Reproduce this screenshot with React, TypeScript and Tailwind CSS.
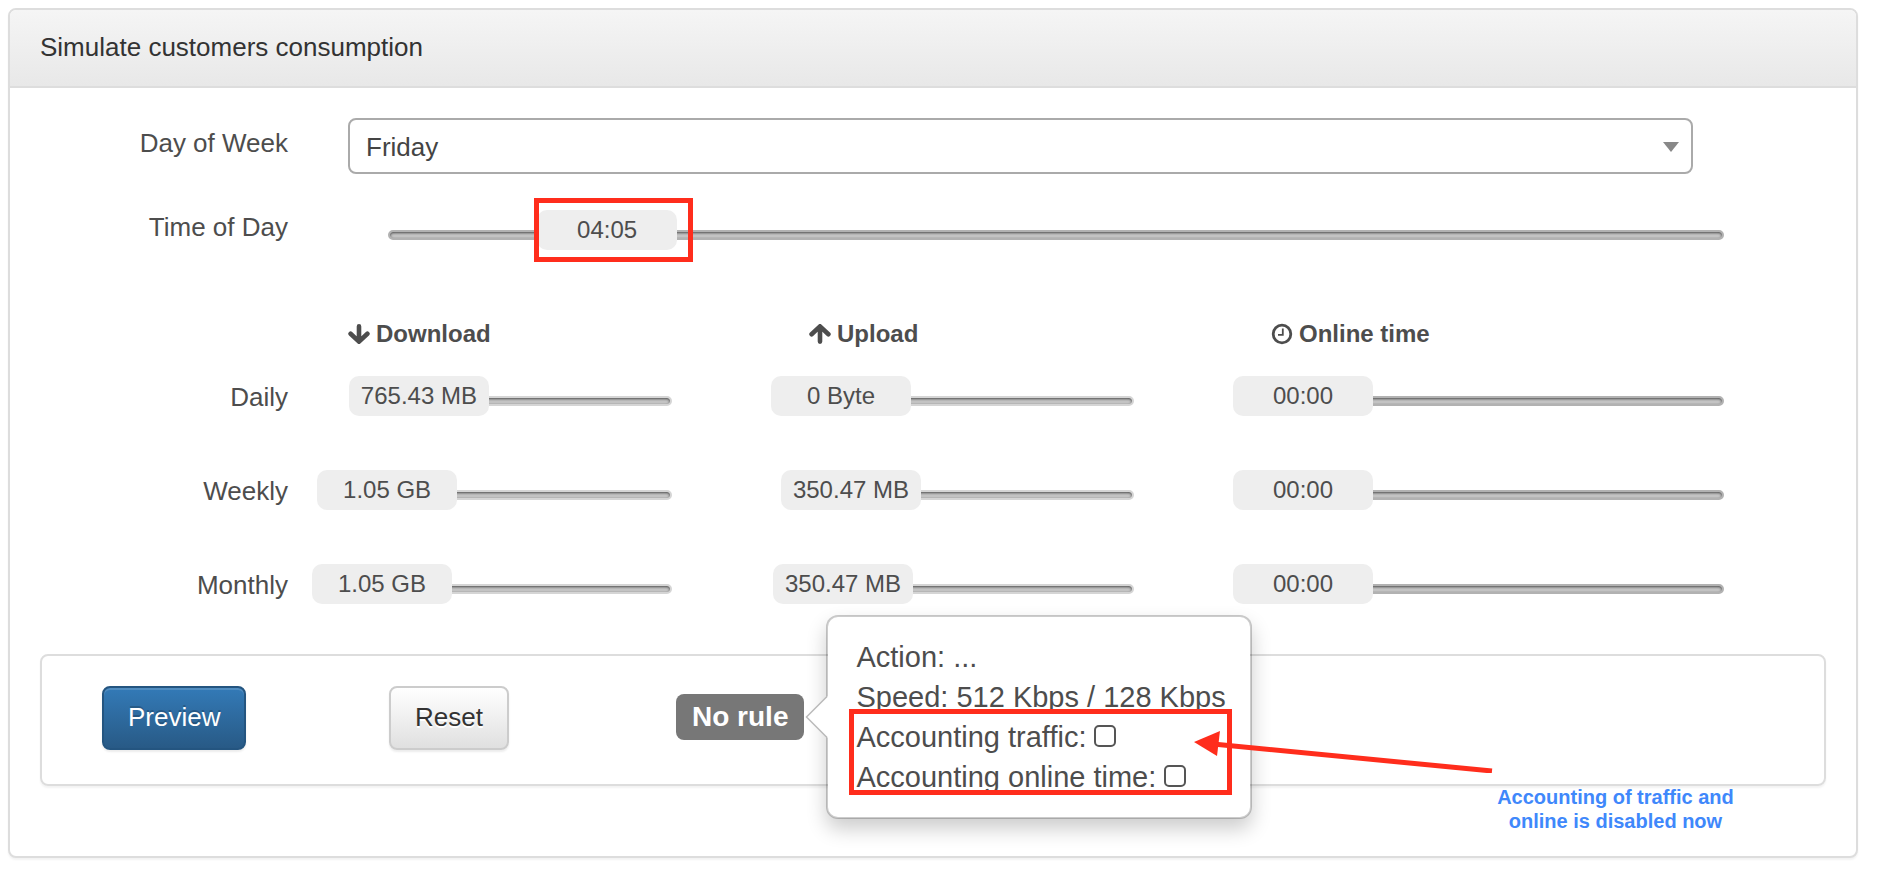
import React, { useId, useState } from "react";

type SliderProps = {
  label: string;
  value: string;
  percent: number;
  strong?: boolean;
  children?: React.ReactNode;
};

function Slider({ label, value, percent, strong, children }: SliderProps) {
  const id = useId();
  const [position, setPosition] = useState(percent);
  return (
    <div className="relative ml-10 h-10 pt-5">
      <input
        id={id}
        type="range"
        min={0}
        max={100}
        step={0.1}
        value={position}
        onChange={(e) => setPosition(Number(e.target.value))}
        aria-label={label}
        className={
          "block h-[10px] w-full appearance-none rounded-full border-2 bg-[#c9c9c9] shadow-[inset_0_1px_3px_#444] [&::-webkit-slider-thumb]:h-[6px] [&::-webkit-slider-thumb]:w-px [&::-webkit-slider-thumb]:appearance-none [&::-webkit-slider-thumb]:bg-transparent " +
          (strong ? "border-[#b2b2b2]" : "border-[#d5d5d5]")
        }
      />
      <div
        className="pointer-events-none absolute top-0 -ml-[78px] h-10 w-[140px]"
        style={{ left: `${position}%` }}
      >
        <output
          htmlFor={id}
          className="block rounded-[10px] bg-[#eee] text-center text-[24px] leading-[40px]"
        >
          {value}
        </output>
        {children}
      </div>
    </div>
  );
}

function ArrowIcon({ up }: { up?: boolean }) {
  return (
    <svg viewBox="0 0 22 20" className={up ? "h-5 w-[22px] rotate-180" : "h-5 w-[22px]"} aria-hidden="true">
      <path
        d="M11 2.4V15M2.6 9.8 11 17.6l8.4-7.8"
        fill="none"
        stroke="currentColor"
        strokeWidth="4.6"
        strokeLinecap="round"
        strokeLinejoin="miter"
      />
    </svg>
  );
}

function ClockIcon() {
  return (
    <svg viewBox="0 0 22 22" className="h-[22px] w-[22px]" aria-hidden="true">
      <circle cx="11" cy="11" r="8.8" fill="none" stroke="currentColor" strokeWidth="2.8" />
      <path d="M11.8 5.6V11.800H7" fill="none" stroke="currentColor" strokeWidth="1.8" />
    </svg>
  );
}

const periods = [
  {
    name: "Daily",
    download: ["765.43 MB", 13.7],
    upload: ["0 Byte", 0],
    online: ["00:00", 0],
  },
  {
    name: "Weekly",
    download: ["1.05 GB", 2.5],
    upload: ["350.47 MB", 3.5],
    online: ["00:00", 0],
  },
  {
    name: "Monthly",
    download: ["1.05 GB", 0.7],
    upload: ["350.47 MB", 0.7],
    online: ["00:00", 0],
  },
] as const;

const days = ["Monday", "Tuesday", "Wednesday", "Thursday", "Friday", "Saturday", "Sunday"];

const labelColumn = "w-[248px] shrink-0 text-right leading-[30px]";
const columns = "grid min-w-0 flex-1 grid-cols-[461fr_462fr_453fr]";
const checkbox =
  "ml-2 inline-block h-[22px] w-[22px] appearance-none rounded-[5px] border-2 border-[#555] bg-white align-baseline checked:bg-[#337ab7]";

function RulePopover() {
  return (
    <div className="absolute top-1/2 left-full ml-[22px] w-[426px] -translate-y-1/2 rounded-xl border-2 border-black/20 bg-white bg-clip-padding px-7 py-5 text-[29px] leading-[40px] shadow-[0_10px_20px_rgba(0,0,0,0.2)]">
      <svg viewBox="0 0 24 44" className="absolute top-1/2 -left-[23px] h-11 w-6 -translate-y-1/2" aria-hidden="true">
        <path d="M23 1 2 22l21 21z" fill="#fff" />
        <path d="M22 1.5 1.5 22 22 42.5" fill="none" stroke="#bbb" strokeWidth="1.5" />
      </svg>
      <p>Action: ...</p>
      <p className="whitespace-nowrap">Speed: 512 Kbps / 128 Kbps</p>
      <div className="relative">
        <label className="block whitespace-nowrap">
          Accounting traffic:
          <input type="checkbox" className={checkbox} />
        </label>
        <label className="block whitespace-nowrap">
          Accounting online time:
          <input type="checkbox" className={checkbox} />
        </label>
        <div className="pointer-events-none absolute -top-2 -left-[7px] h-[86px] w-[383px] border-[5px] border-[#ff2d1c]" />
        <svg
          viewBox="0 0 300 44"
          className="pointer-events-none absolute top-3 left-[337px] h-11 w-[300px]"
          aria-hidden="true"
        >
          <path d="M20 15 299 42" stroke="#ff2d1c" strokeWidth="5" />
          <path d="M1 13 27 2 24 27z" fill="#ff2d1c" />
        </svg>
        <p className="absolute top-[68px] left-[637px] w-[244px] text-center text-[20px] leading-[24px] font-bold text-[#3f88fb]">
          Accounting of traffic and online is disabled now
        </p>
      </div>
    </div>
  );
}

export default function App() {
  return (
    <main className="min-h-screen bg-white py-2 pr-[30px] pl-2 font-['Liberation_Sans',Arial,sans-serif] text-[26px] text-[#4d4d4d]">
      <section className="rounded-lg border-2 border-[#ddd] bg-white shadow-[0_2px_2px_rgba(0,0,0,0.05)]">
        <header className="rounded-t-md border-b-2 border-[#ddd] bg-linear-to-b from-[#f5f5f5] to-[#e8e8e8] px-[30px] pt-[22px] pb-[24px]">
          <h1 className="leading-[30px] text-[#333]">Simulate customers consumption</h1>
        </header>

        <div className="px-[30px] pt-[30px] pb-[70px]">
          <form onSubmit={(e) => e.preventDefault()}>
            <div className="pr-[102px]">
              <div className="flex items-center gap-[60px]">
                <label htmlFor="day" className={labelColumn + " pb-[6px]"}>
                  Day of Week
                </label>
                <div className="relative mr-[31px] min-w-0 flex-1">
                  <select
                    id="day"
                    defaultValue="Friday"
                    className="block h-14 w-full appearance-none rounded-lg border-2 border-[#aaa] bg-white px-4 pt-[2px] text-[#444]"
                  >
                    {days.map((day) => (
                      <option key={day}>{day}</option>
                    ))}
                  </select>
                  <svg
                    viewBox="0 0 16 10"
                    className="pointer-events-none absolute top-6 right-[14px] h-[10px] w-4"
                    aria-hidden="true"
                  >
                    <path d="M0 0h16L8 10z" fill="#888" />
                  </svg>
                </div>
              </div>

              <div className="mt-9 flex items-center gap-[60px]">
                <span className={labelColumn + " pb-[6px]"}>Time of Day</span>
                <div className="min-w-0 flex-1">
                  <Slider label="Time of Day" value="04:05" percent={17} strong>
                    <div className="absolute -top-3 -left-[3px] h-16 w-[159px] border-[5px] border-[#ff2d1c]" />
                  </Slider>
                </div>
              </div>

              <div className="mt-16 flex gap-[60px]">
                <div className={labelColumn} />
                <div className={columns + " text-[24px] leading-[40px] font-bold"}>
                  <div className="flex items-center gap-[6px]">
                    <ArrowIcon />
                    Download
                  </div>
                  <div className="flex items-center gap-[6px]">
                    <ArrowIcon up />
                    Upload
                  </div>
                  <div className="flex items-center gap-[6px]">
                    <ClockIcon />
                    Online time
                  </div>
                </div>
              </div>

              <div className="mt-[22px] flex flex-col gap-[54px]">
                {periods.map((p) => (
                  <div key={p.name} className="flex items-center gap-[60px]">
                    <span className={labelColumn + " pt-[2px]"}>{p.name}</span>
                    <div className={columns}>
                      <div className="pr-[137px]">
                        <Slider label={p.name + " download"} value={p.download[0]} percent={p.download[1]} />
                      </div>
                      <div className="pr-[137px]">
                        <Slider label={p.name + " upload"} value={p.upload[0]} percent={p.upload[1]} />
                      </div>
                      <div>
                        <Slider label={p.name + " online time"} value={p.online[0]} percent={p.online[1]} strong />
                      </div>
                    </div>
                  </div>
                ))}
              </div>
            </div>

            <div className="mt-[50px] flex items-start rounded-lg border-2 border-[#ddd] pt-[30px] pr-[30px] pb-[34px] pl-[60px] shadow-[0_2px_2px_rgba(0,0,0,0.05)]">
              <div className="w-[287px]">
                <button
                  type="submit"
                  className="block h-16 rounded-lg border-2 border-[#245580] bg-linear-to-b from-[#337ab7] to-[#285a86] px-6 pb-[2px] text-white shadow-[inset_0_2px_0_rgba(255,255,255,0.15),0_2px_2px_rgba(0,0,0,0.075)] [text-shadow:0_-2px_0_rgba(0,0,0,0.2)]"
                >
                  Preview
                </button>
              </div>
              <div className="w-[287px]">
                <button
                  type="reset"
                  className="block h-16 rounded-lg border-2 border-[#ccc] bg-linear-to-b from-white to-[#e0e0e0] px-6 pb-[2px] text-[#333] shadow-[inset_0_2px_0_rgba(255,255,255,0.15),0_2px_2px_rgba(0,0,0,0.075)] [text-shadow:0_2px_0_#fff]"
                >
                  Reset
                </button>
              </div>
              <div className="relative mt-2">
                <span className="block rounded-lg bg-[#777] px-4 text-[28px] leading-[46px] font-bold whitespace-nowrap text-white">
                  No rule
                </span>
                <RulePopover />
              </div>
            </div>
          </form>
        </div>
      </section>
    </main>
  );
}
